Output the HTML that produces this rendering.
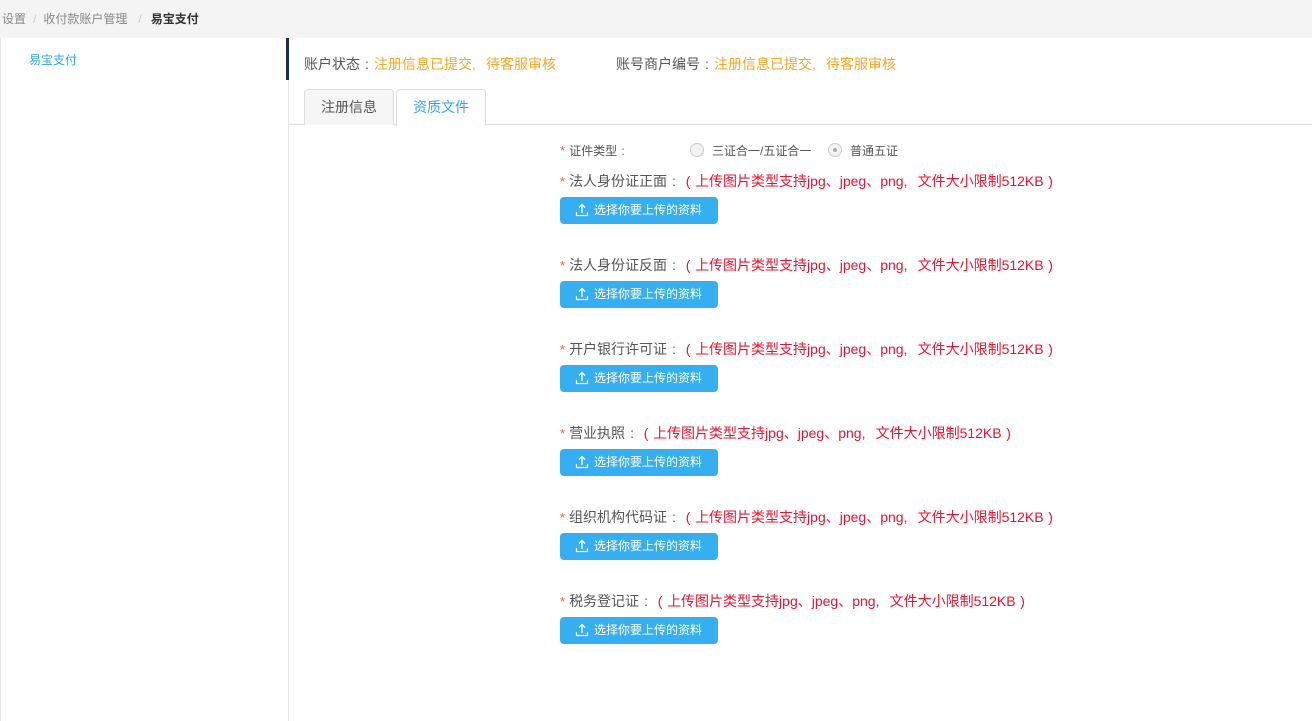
<!DOCTYPE html>
<html><head><meta charset="utf-8"><style>
*{margin:0;padding:0;box-sizing:border-box}
body{width:1312px;height:721px;background:#fff;font-family:"Liberation Sans","Noto Sans CJK SC",sans-serif;font-size:13px;color:#555;position:relative;overflow:hidden}
.top{position:absolute;left:0;top:0;width:1312px;height:38px;background:#f4f4f4;font-size:12px;line-height:38px;padding-left:2px;color:#888}
.top .sep{color:#ccc;margin:0 7px}
.top b{color:#333}
.side{position:absolute;left:0;top:38px;width:289px;height:683px;border-left:1px solid #e6e6e6;border-right:1px solid #e6e6e6}
.side a{position:absolute;left:28px;top:13px;font-size:12px;color:#2ea7e8}
.bar{position:absolute;left:286px;top:38px;width:3px;height:42px;background:#1f2d4d}
.status{position:absolute;top:54px;font-size:14px;line-height:20px;color:#555}
.status span{color:#f5a623}
.tabs{position:absolute;left:289px;top:124px;width:1023px;height:1px;background:#ddd}
.tab{position:absolute;top:89px;height:36px;border:1px solid #ddd;border-bottom:none;border-radius:4px 4px 0 0;line-height:34px;text-align:center;font-size:14px}
.t1{left:304px;width:90px;background:#f6f6f6;color:#555}
.t2{left:396px;width:90px;background:#fff;color:#2ea7e8;height:37px}
.star{color:#f05a28;font-size:13px;margin-right:4px}
.lbl{position:absolute;left:560px;font-size:14px;line-height:20px;color:#555;white-space:nowrap}
.lbl .r{color:#f0102d}
.f{display:inline-block;width:1em;text-align:center}
.fl{display:inline-block;width:1em;text-align:left}
.btn{position:absolute;left:560px;width:158px;height:27px;background:#35aff0;border-radius:4px;color:#fff;font-size:12px;line-height:27px;padding-left:34px}
.btn svg{position:absolute;left:15px;top:6px}
.radio{display:inline-block;width:14px;height:14px;border:1px solid #ccc;border-radius:50%;background:#f2f2f2;vertical-align:-2px;margin-right:8px;position:relative}
.radio.on::after{content:"";position:absolute;left:4px;top:4px;width:4px;height:4px;border-radius:50%;background:#aaa}
</style></head><body>
<div class="top">设置<span class="sep">/</span>收付款账户管理<span class="sep" style="margin:0 9px 0 11px">/</span><b>易宝支付</b></div>
<div class="side"><a>易宝支付</a></div>
<div class="bar"></div>
<div class="status" style="left:304px">账户状态<span class="f" style="color:#555">:</span><span>注册信息已提交<span class="fl">,</span>待客服审核</span></div>
<div class="status" style="left:616px">账号商户编号<span class="f" style="color:#555">:</span><span>注册信息已提交<span class="fl">,</span>待客服审核</span></div>
<div class="tabs"></div>
<div class="tab t1">注册信息</div>
<div class="tab t2">资质文件</div>
<div class="lbl" style="top:141px;font-size:12px"><span class="star">*</span>证件类型<span class="f">:</span></div>
<div class="lbl" style="left:690px;top:141px;font-size:12px"><span class="radio"></span>三证合一/五证合一</div>
<div class="lbl" style="left:828px;top:141px;font-size:12px"><span class="radio on"></span>普通五证</div>

<div class="lbl" style="top:171px"><span class="star">*</span>法人身份证正面<span class="f">:</span><span class="r"><span class="f">(</span>上传图片类型支持jpg<span class="fl">、</span>jpeg<span class="fl">、</span>png<span class="fl">,</span>文件大小限制512KB<span class="f">)</span></span></div>
<div class="btn" style="top:197px"><svg width="14" height="14" viewBox="0 0 14 14" fill="none" stroke="#fff" stroke-width="1.3"><path d="M7 10V1.5M4 4.5L7 1.5L10 4.5M1.5 9v3.5h11V9"/></svg>选择你要上传的资料</div>
<div class="lbl" style="top:255px"><span class="star">*</span>法人身份证反面<span class="f">:</span><span class="r"><span class="f">(</span>上传图片类型支持jpg<span class="fl">、</span>jpeg<span class="fl">、</span>png<span class="fl">,</span>文件大小限制512KB<span class="f">)</span></span></div>
<div class="btn" style="top:281px"><svg width="14" height="14" viewBox="0 0 14 14" fill="none" stroke="#fff" stroke-width="1.3"><path d="M7 10V1.5M4 4.5L7 1.5L10 4.5M1.5 9v3.5h11V9"/></svg>选择你要上传的资料</div>
<div class="lbl" style="top:339px"><span class="star">*</span>开户银行许可证<span class="f">:</span><span class="r"><span class="f">(</span>上传图片类型支持jpg<span class="fl">、</span>jpeg<span class="fl">、</span>png<span class="fl">,</span>文件大小限制512KB<span class="f">)</span></span></div>
<div class="btn" style="top:365px"><svg width="14" height="14" viewBox="0 0 14 14" fill="none" stroke="#fff" stroke-width="1.3"><path d="M7 10V1.5M4 4.5L7 1.5L10 4.5M1.5 9v3.5h11V9"/></svg>选择你要上传的资料</div>
<div class="lbl" style="top:423px"><span class="star">*</span>营业执照<span class="f">:</span><span class="r"><span class="f">(</span>上传图片类型支持jpg<span class="fl">、</span>jpeg<span class="fl">、</span>png<span class="fl">,</span>文件大小限制512KB<span class="f">)</span></span></div>
<div class="btn" style="top:449px"><svg width="14" height="14" viewBox="0 0 14 14" fill="none" stroke="#fff" stroke-width="1.3"><path d="M7 10V1.5M4 4.5L7 1.5L10 4.5M1.5 9v3.5h11V9"/></svg>选择你要上传的资料</div>
<div class="lbl" style="top:507px"><span class="star">*</span>组织机构代码证<span class="f">:</span><span class="r"><span class="f">(</span>上传图片类型支持jpg<span class="fl">、</span>jpeg<span class="fl">、</span>png<span class="fl">,</span>文件大小限制512KB<span class="f">)</span></span></div>
<div class="btn" style="top:533px"><svg width="14" height="14" viewBox="0 0 14 14" fill="none" stroke="#fff" stroke-width="1.3"><path d="M7 10V1.5M4 4.5L7 1.5L10 4.5M1.5 9v3.5h11V9"/></svg>选择你要上传的资料</div>
<div class="lbl" style="top:591px"><span class="star">*</span>税务登记证<span class="f">:</span><span class="r"><span class="f">(</span>上传图片类型支持jpg<span class="fl">、</span>jpeg<span class="fl">、</span>png<span class="fl">,</span>文件大小限制512KB<span class="f">)</span></span></div>
<div class="btn" style="top:617px"><svg width="14" height="14" viewBox="0 0 14 14" fill="none" stroke="#fff" stroke-width="1.3"><path d="M7 10V1.5M4 4.5L7 1.5L10 4.5M1.5 9v3.5h11V9"/></svg>选择你要上传的资料</div>
</body></html>
